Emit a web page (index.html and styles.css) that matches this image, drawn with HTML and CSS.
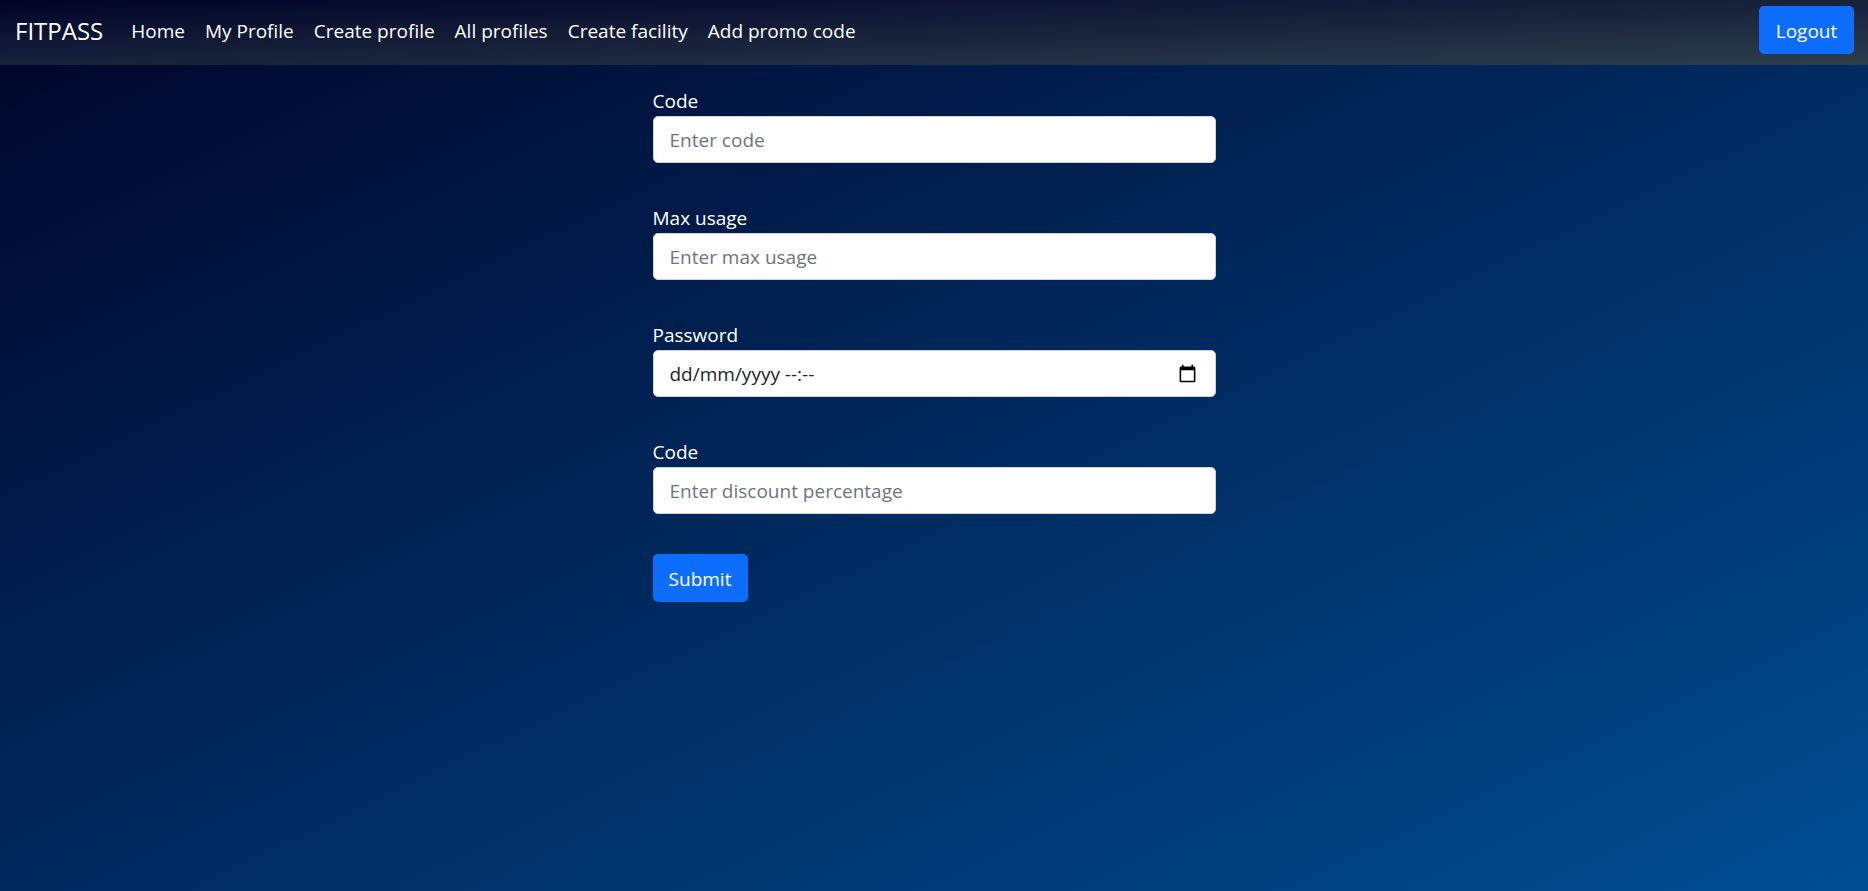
FILE: index.html
```html
<!DOCTYPE html>
<html lang="en">
<head>
<meta charset="utf-8">
<meta name="viewport" content="width=device-width, initial-scale=1">
<title>FITPASS</title>
<link rel="stylesheet" href="styles.css">
</head>
<body>
<header class="navbar">
  <a class="brand" href="#">FITPASS</a>
  <nav class="nav-links">
    <a href="#">Home</a>
    <a href="#">My Profile</a>
    <a href="#">Create profile</a>
    <a href="#">All profiles</a>
    <a href="#">Create facility</a>
    <a href="#">Add promo code</a>
  </nav>
  <button class="btn" type="button">Logout</button>
</header>
<main class="page">
  <form class="promo-form">
    <div class="field">
      <label for="code">Code</label>
      <input class="control" id="code" type="text" placeholder="Enter code">
    </div>
    <div class="field">
      <label for="usage">Max usage</label>
      <input class="control" id="usage" type="text" placeholder="Enter max usage">
    </div>
    <div class="field">
      <label for="valid">Password</label>
      <div class="date-box">
        <input class="control control-date" id="valid" type="text" placeholder="dd/mm/yyyy --:--">
        <svg class="calendar" viewBox="0 0 24 24" aria-hidden="true"><path d="M20 3h-1V1h-2v2H7V1H5v2H4c-1.100 0-2 .9-2 2v16c0 1.100.9 2 2 2h16c1.100 0 2-.9 2-2V5c0-1.100-.9-2-2-2zm0 18H4V8h16v13z"/></svg>
      </div>
    </div>
    <div class="field">
      <label for="discount">Code</label>
      <input class="control" id="discount" type="text" placeholder="Enter discount percentage">
    </div>
    <button class="btn" type="submit">Submit</button>
  </form>
</main>
</body>
</html>
```
FILE: styles.css
```css
* {
  box-sizing: border-box;
}

body {
  margin: 0;
  min-height: 100vh;
  font-family: "Open Sans", "Noto Sans", sans-serif;
  font-size: 19px;
  line-height: 30px;
  color: #fff;
  background: linear-gradient(to bottom right, #000428, #004e92);
}

.navbar {
  display: flex;
  align-items: center;
  padding: 6px 14px 11px 15px;
  background: linear-gradient(to bottom right, #000428, #2d3e4c);
}

.brand {
  margin-right: 28px;
  padding-top: 2px;
  font-size: 24px;
  color: #fff;
  text-decoration: none;
}

.nav-links {
  display: flex;
  flex: 1;
  gap: 20px;
  padding-top: 2px;
}

.nav-links a {
  color: #fff;
  text-decoration: none;
}

.btn {
  height: 48px;
  min-width: 95px;
  padding: 2px 16px 0;
  border: 0;
  border-radius: 5px;
  background: #0d6efd;
  color: #fff;
  font: inherit;
}

.page {
  padding: 21px 20px;
}

.promo-form {
  max-width: 563px;
  margin: 0 auto;
}

.field {
  display: flex;
  flex-direction: column;
  margin-bottom: 40px;
}

.control {
  display: block;
  width: 100%;
  height: 47px;
  padding: 0 16px;
  border: 1px solid #ced4da;
  border-radius: 5px;
  background: #fff;
  color: #212529;
  font: inherit;
}

.control::placeholder {
  color: #6c757d;
  opacity: 1;
}

.control-date::placeholder {
  color: #212529;
}

.date-box {
  position: relative;
}

.calendar {
  position: absolute;
  top: 14px;
  right: 19px;
  width: 19px;
  height: 19px;
}
```
